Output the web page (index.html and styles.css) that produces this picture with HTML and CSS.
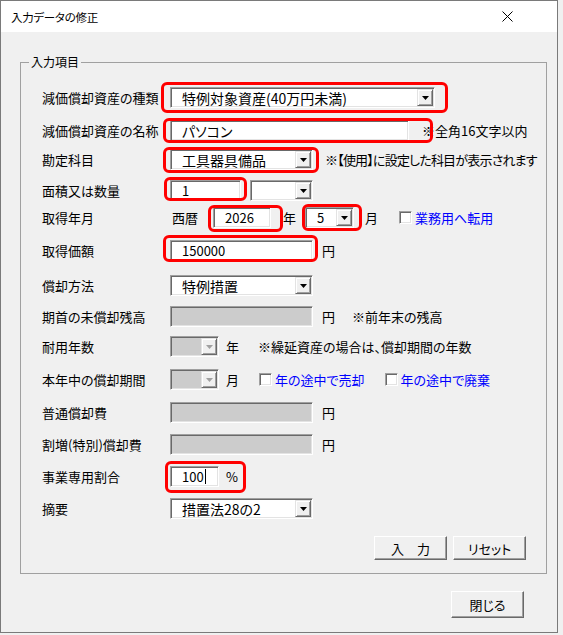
FILE: index.html
```html
<!DOCTYPE html>
<html lang="ja">
<head>
    <meta charset="UTF-8">
    <title>入力データの修正</title>
    <link rel="stylesheet" href="styles.css">
</head>
<body>

    <div class="window">

        <!-- Title bar -->
        <div class="titlebar">
            <span class="title">入力データの修正</span>
            <svg class="close-x" width="11" height="11" viewBox="0 0 11 11">
                <path d="M0.5 0.5 L10.5 10.5 M10.5 0.5 L0.5 10.5" stroke="#000" stroke-width="1" fill="none"/>
            </svg>
        </div>

        <div class="client">
            <fieldset class="group">
                <legend>入力項目</legend>

                <div class="form">
                    <div class="row">
                        <span class="label">減価償却資産の種類</span>
                        <div class="combo w-kind">
                            <span class="val">特例対象資産(40万円未満)</span>
                            <span class="drop"><svg width="7" height="4"><polygon points="0,0 7,0 3.5,4" fill="#000"/></svg></span>
                            <span class="mark m-kind"></span>
                        </div>
                    </div>

                    <div class="row">
                        <span class="label">減価償却資産の名称</span>
                        <div class="field w-name">
                            <span class="val">パソコン</span>
                            <span class="mark m-name"></span>
                        </div>
                        <span class="note n-name">※全角16文字以内</span>
                    </div>

                    <div class="row">
                        <span class="label">勘定科目</span>
                        <div class="combo w-mid">
                            <span class="val">工具器具備品</span>
                            <span class="drop"><svg width="7" height="4"><polygon points="0,0 7,0 3.5,4" fill="#000"/></svg></span>
                            <span class="mark m-account"></span>
                        </div>
                        <span class="note n-account">※【使用】に設定した科目が表示されます</span>
                    </div>

                    <div class="row">
                        <span class="label">面積又は数量</span>
                        <div class="field w-qty">
                            <span class="val num">1</span>
                            <span class="mark m-qty"></span>
                        </div>
                        <div class="combo w-qunit">
                            <span class="val"></span>
                            <span class="drop"><svg width="7" height="4"><polygon points="0,0 7,0 3.5,4" fill="#000"/></svg></span>
                        </div>
                    </div>

                    <div class="row">
                        <span class="label">取得年月</span>
                        <span class="era">西暦</span>
                        <div class="field w-year">
                            <span class="val num">2026</span>
                            <span class="mark m-year"></span>
                        </div>
                        <span class="unit u-year">年</span>
                        <div class="combo w-small">
                            <span class="val num">5</span>
                            <span class="drop"><svg width="7" height="4"><polygon points="0,0 7,0 3.5,4" fill="#000"/></svg></span>
                            <span class="mark m-month"></span>
                        </div>
                        <span class="unit u-month">月</span>
                        <span class="check c-convert"></span>
                        <span class="check-text">業務用へ転用</span>
                    </div>

                    <div class="row">
                        <span class="label">取得価額</span>
                        <div class="field w-mid">
                            <span class="val num">150000</span>
                            <span class="mark m-price"></span>
                        </div>
                        <span class="unit">円</span>
                    </div>

                    <div class="row">
                        <span class="label">償却方法</span>
                        <div class="combo w-mid">
                            <span class="val">特例措置</span>
                            <span class="drop"><svg width="7" height="4"><polygon points="0,0 7,0 3.5,4" fill="#000"/></svg></span>
                        </div>
                    </div>

                    <div class="row">
                        <span class="label">期首の未償却残高</span>
                        <div class="field w-mid disabled"></div>
                        <span class="unit">円</span>
                        <span class="note n-balance">※前年末の残高</span>
                    </div>

                    <div class="row">
                        <span class="label">耐用年数</span>
                        <div class="combo w-small disabled">
                            <span class="val"></span>
                            <span class="drop"><svg width="7" height="4"><polygon points="0,0 7,0 3.5,4" fill="#a0a0a0"/></svg></span>
                        </div>
                        <span class="unit u-short">年</span>
                        <span class="note n-life">※繰延資産の場合は、償却期間の年数</span>
                    </div>

                    <div class="row">
                        <span class="label">本年中の償却期間</span>
                        <div class="combo w-small disabled">
                            <span class="val"></span>
                            <span class="drop"><svg width="7" height="4"><polygon points="0,0 7,0 3.5,4" fill="#a0a0a0"/></svg></span>
                        </div>
                        <span class="unit u-short">月</span>
                        <span class="check c-sold"></span>
                        <span class="check-text">年の途中で売却</span>
                        <span class="check c-scrap"></span>
                        <span class="check-text">年の途中で廃棄</span>
                    </div>

                    <div class="row">
                        <span class="label">普通償却費</span>
                        <div class="field w-mid disabled"></div>
                        <span class="unit">円</span>
                    </div>

                    <div class="row">
                        <span class="label">割増(特別)償却費</span>
                        <div class="field w-mid disabled"></div>
                        <span class="unit">円</span>
                    </div>

                    <div class="row">
                        <span class="label">事業専用割合</span>
                        <div class="field w-small">
                            <span class="val num">100</span><span class="caret"></span>
                            <span class="mark m-ratio"></span>
                        </div>
                        <span class="unit u-short">%</span>
                    </div>

                    <div class="row">
                        <span class="label">摘要</span>
                        <div class="combo w-mid">
                            <span class="val">措置法28の2</span>
                            <span class="drop"><svg width="7" height="4"><polygon points="0,0 7,0 3.5,4" fill="#000"/></svg></span>
                        </div>
                    </div>
                </div>

                <div class="actions">
                    <button class="btn">入　力</button>
                    <button class="btn">リセット</button>
                </div>
            </fieldset>

            <div class="footer">
                <button class="btn btn-close">閉じる</button>
            </div>
        </div>
    </div>

</body>
</html>
```

FILE: styles.css
```css
body, html {
    margin: 0;
    padding: 0;
    background: #f0f0f0;
    font-family: "Noto Sans CJK JP", sans-serif;
    font-size: 13px;
    color: #000;
}

/* Window frame */
.window {
    width: 556px;
    height: 631px;
    border: 1px solid #7a7a7a;
    background: #f0f0f0;
}

.titlebar {
    height: 31px;
    background: #fff;
    display: flex;
    align-items: center;
    justify-content: space-between;
    padding: 0 44px 0 10px;
}

.title {
    font-size: 11.5px;
    font-feature-settings: "palt";
    letter-spacing: -0.3px;
}

.close-x {
    display: block;
}

.client {
    padding: 23px 0 0 19px;
}

/* Group box */
.group {
    width: 527px;
    box-sizing: border-box;
    margin: 0;
    padding: 0 20px 13px 0;
    min-width: 0;
    border: 1px solid #a0a0a0;
}

.group legend {
    margin-left: 8px;
    padding: 0 2px;
    font-size: 12px;
    line-height: 14px;
}

/* Form rows */
.form {
    padding: 18px 0 0 21px;
    display: grid;
    grid-template-rows: 33px 29px 31px 27px 33px 35px 31px 30px 33px 33px 32px 32px 32px 21px;
}

.row {
    display: flex;
    align-items: center;
    height: 21px;
    font-feature-settings: "palt";
    white-space: nowrap;
}

.label {
    width: 128px;
    flex: none;
}

/* Sunken boxes: text fields, combos, check boxes */
.field, .combo, .check {
    position: relative;
    box-sizing: border-box;
    flex: none;
    background: #fff;
    border: 1px solid;
    border-color: #a0a0a0 #fff #fff #a0a0a0;
    box-shadow: inset 1px 1px 0 #696969, inset -1px -1px 0 #e3e3e3;
}

.field, .combo {
    height: 21px;
    display: flex;
    align-items: center;
    padding: 1px 1px 1px 11px;
    font-size: 14px;
}

.disabled {
    background: #cccccc;
}

.val {
    flex: 1;
    overflow: hidden;
}

.num {
    font-size: 13px;
    flex: none;
}

.combo .num {
    flex: 1;
}

.caret {
    width: 1px;
    height: 15px;
    background: #000;
    margin-left: 1px;
}

.drop {
    flex: none;
    width: 16px;
    height: 17px;
    box-sizing: border-box;
    background: #f0f0f0;
    border: 1px solid;
    border-color: #e3e3e3 #696969 #696969 #e3e3e3;
    box-shadow: inset 1px 1px 0 #fff, inset -1px -1px 0 #a0a0a0;
    display: flex;
    align-items: center;
    justify-content: center;
}

.drop svg {
    display: block;
}

.w-kind { width: 265px; }
.w-name { width: 239px; }
.w-mid { width: 143px; }
.w-qty { width: 71px; }
.w-qunit { width: 63px; margin-left: 9px; }
.w-year { width: 58px; }
.w-small { width: 49px; }

.check {
    width: 13px;
    height: 13px;
}

.c-convert { margin-left: 21px; }
.c-sold { margin-left: 20px; }
.c-scrap { margin-left: 20px; }

.check-text {
    margin-left: 3px;
    color: #0000ff;
}

.era {
    margin-left: 2px;
    width: 41px;
}

.unit { margin-left: 9px; }
.u-short { margin-left: 7px; }
.u-year { margin-left: 12px; margin-right: 9px; }
.u-month { margin-left: 11px; }

.note { color: #000; }
.n-name { margin-left: 13px; }
.n-account { margin-left: 12px; letter-spacing: -0.8px; }
.n-balance { margin-left: 17px; }
.n-life { margin-left: 19px; }

/* Red highlight frames drawn over the fields */
.mark {
    position: absolute;
    border: 3px solid #ff0000;
    border-radius: 6px;
    pointer-events: none;
    z-index: 1;
}

.m-kind { top: -6px; right: -14px; bottom: -6px; left: -10px; }
.m-name { top: -3px; right: -25px; bottom: -3px; left: -8px; }
.m-account { top: -3px; right: -7px; bottom: -4px; left: -8px; }
.m-qty { top: -4px; right: -7px; bottom: -1px; left: -7px; }
.m-year { top: -3px; right: -13px; bottom: -5px; left: -6px; }
.m-month { top: -4px; right: -9px; bottom: -4px; left: -4px; }
.m-price { top: -6px; right: -6px; bottom: -2px; left: -8px; }
.m-ratio { top: -6px; right: -28px; bottom: -7px; left: -6px; }

/* Buttons */
.actions {
    display: flex;
    justify-content: flex-end;
    gap: 6px;
    margin-top: 17px;
}

.btn {
    width: 73px;
    height: 24px;
    padding: 0;
    font-family: "Noto Sans CJK JP", sans-serif;
    font-size: 13px;
    font-feature-settings: "palt";
    color: #000;
    background: #f0f0f0;
    border: 1px solid;
    border-color: #fff #696969 #696969 #fff;
    box-shadow: inset -1px -1px 0 #a0a0a0;
}

.footer {
    display: flex;
    justify-content: flex-end;
    padding-right: 33px;
    margin-top: 17px;
}

.btn-close {
    height: 27px;
}
```
